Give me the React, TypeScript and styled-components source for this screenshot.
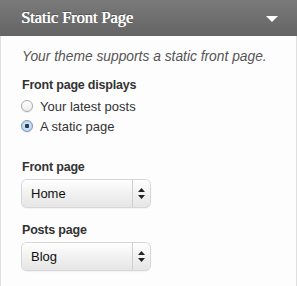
import React from 'react';
import styled, { createGlobalStyle } from 'styled-components';

const GlobalStyle = createGlobalStyle`
  html, body {
    margin: 0;
    padding: 0;
    background: #fff;
  }
  body {
    font-family: 'Liberation Sans', Arial, sans-serif;
    font-size: 13px;
    color: #333;
  }
`;

const Panel = styled.div`
  width: 297px;
  height: 286px;
  box-sizing: border-box;
  display: flex;
  flex-direction: column;
  background: #fdfdfd;
`;

const Header = styled.div`
  height: 36px;
  flex-shrink: 0;
  display: flex;
  align-items: center;
  justify-content: space-between;
  padding: 0 19px 0 21px;
  background: linear-gradient(to bottom, #7a7a7a, #646464);
`;

const Title = styled.h3`
  margin: 0;
  font-family: 'Liberation Serif', 'Times New Roman', serif;
  font-weight: normal;
  font-size: 16.5px;
  color: #fff;
  letter-spacing: -0.1px;
  text-shadow: 0.4px 0 0 #fff, 0 -1px 0 rgba(0, 0, 0, 0.3);
`;

const Arrow = styled.span`
  width: 0;
  height: 0;
  border-left: 6px solid transparent;
  border-right: 6px solid transparent;
  border-top: 6px solid #fff;
  margin-top: 1px;
`;

const Body = styled.div`
  flex: 1;
  border-left: 1px solid #dfdfdf;
  border-right: 1px solid #dfdfdf;
  padding: 13px 20px 0 21px;
`;

const Description = styled.p`
  margin: 0 0 14px;
  font-style: italic;
  font-size: 13.8px;
  color: #555;
`;

const Label = styled.div`
  font-weight: bold;
  font-size: 12.5px;
  letter-spacing: -0.2px;
  color: #333;
  margin-bottom: 4px;
`;

const RadioRow = styled.label`
  display: flex;
  align-items: center;
  gap: 7px;
  height: 20px;
  margin-left: -1px;
`;

const Radio = styled.span<{ checked?: boolean }>`
  width: 12px;
  height: 12px;
  border-radius: 50%;
  box-sizing: border-box;
  border: 1px solid #a9a9a9;
  background: ${p =>
    p.checked
      ? 'radial-gradient(circle, #2b3a52 0 2px, #cfe3f7 2.5px, #a8c8ea 100%)'
      : 'linear-gradient(to bottom, #ffffff, #ececec)'};
  border-color: ${p => (p.checked ? '#7e96b4' : '#a9a9a9')};
  box-shadow: 0 1px 1px rgba(0, 0, 0, 0.08);
`;

const Group = styled.div<{ gap: number }>`
  margin-top: ${p => p.gap}px;
`;

const Select = styled.div`
  margin-top: 6px;
  width: 128px;
  height: 27px;
  box-sizing: border-box;
  display: flex;
  align-items: stretch;
  border-radius: 5px;
  background: linear-gradient(to bottom, #ffffff 0%, #f1f1f1 50%, #e6e6e6 100%);
  box-shadow: 0 0 0 1px #d6d6d6, 0 1px 2px rgba(0, 0, 0, 0.15);
  font-size: 13px;
  color: #111;
`;

const SelectText = styled.span`
  flex: 1;
  display: flex;
  align-items: center;
  padding-left: 9px;
`;

const Stepper = styled.span`
  width: 17px;
  border-left: 1px solid #cfcfcf;
  display: flex;
  align-items: center;
  justify-content: center;
`;

function Updown() {
  return (
    <svg width="7" height="11" viewBox="0 0 7 11">
      <path d="M3.5 0 L7 4 L0 4 Z" fill="#222" />
      <path d="M3.5 11 L7 7 L0 7 Z" fill="#222" />
    </svg>
  );
}

function Dropdown({ value }: { value: string }) {
  return (
    <Select>
      <SelectText>{value}</SelectText>
      <Stepper>
        <Updown />
      </Stepper>
    </Select>
  );
}

export default function App() {
  return (
    <>
      <GlobalStyle />
      <Panel>
        <Header>
          <Title>Static Front Page</Title>
          <Arrow />
        </Header>
        <Body>
          <Description>Your theme supports a static front page.</Description>
          <Label>Front page displays</Label>
          <RadioRow>
            <Radio />
            Your latest posts
          </RadioRow>
          <RadioRow>
            <Radio checked />
            A static page
          </RadioRow>
          <Group gap={24}>
            <Label>Front page</Label>
            <Dropdown value="Home" />
          </Group>
          <Group gap={16}>
            <Label>Posts page</Label>
            <Dropdown value="Blog" />
          </Group>
        </Body>
      </Panel>
    </>
  );
}
